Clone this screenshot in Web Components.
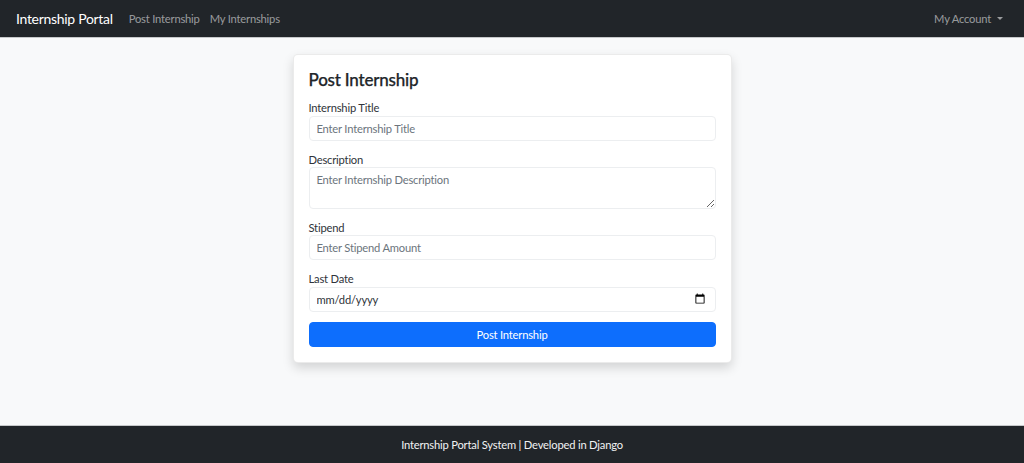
<!DOCTYPE html>
<html>
<head>
<meta charset="utf-8">
<title>Internship Portal</title>
<style>
html, body { margin: 0; height: 100%; }
body {
  background: #f8f9fa;
  color: #212529;
  font-family: Lato, "Open Sans", sans-serif;
  font-size: 11.2px;
  line-height: 1.5;
  letter-spacing: -0.2px;
}
.page { display: flex; flex-direction: column; height: 463px; overflow: hidden; }
</style>
</head>
<body>
<div class="page">
  <portal-navbar brand="Internship Portal">
    <nav-link>Post Internship</nav-link>
    <nav-link>My Internships</nav-link>
    <nav-link slot="right" caret>My Account</nav-link>
  </portal-navbar>
  <portal-main>
    <form-card heading="Post Internship">
      <form-field label="Internship Title" placeholder="Enter Internship Title"></form-field>
      <form-field label="Description" placeholder="Enter Internship Description" type="textarea"></form-field>
      <form-field label="Stipend" placeholder="Enter Stipend Amount"></form-field>
      <form-field label="Last Date" type="date"></form-field>
      <submit-button>Post Internship</submit-button>
    </form-card>
  </portal-main>
  <portal-footer>Internship Portal System | Developed in Django</portal-footer>
</div>

<script>
class PortalNavbar extends HTMLElement {
  constructor() {
    super();
    this.attachShadow({ mode: 'open' });
    this.shadowRoot.innerHTML = `
<style>
:host {
  display: flex;
  align-items: center;
  box-sizing: content-box;
  height: 36px;
  flex: none;
  padding: 1px 16px 0;
  background: #212529;
  border-bottom: 1px solid #c6c8ca;
}
.brand { color: #fff; font-size: 14px; letter-spacing: -0.3px; margin-right: 16px; line-height: 24px; }
.links { display: flex; gap: 10px; }
.right { margin-left: auto; margin-right: 5px; }
</style>
<span class="brand"></span>
<div class="links"><slot></slot></div>
<div class="right"><slot name="right"></slot></div>`;
  }
  connectedCallback() {
    this.shadowRoot.querySelector('.brand').textContent = this.getAttribute('brand');
  }
}

class NavLink extends HTMLElement {
  constructor() {
    super();
    this.attachShadow({ mode: 'open' });
    this.shadowRoot.innerHTML = `
<style>
:host { display: inline-flex; align-items: center; color: rgba(255,255,255,.55); font-size: 11.2px; cursor: pointer; }
.caret {
  display: none;
  margin-left: 6px;
  border-top: 3.4px solid;
  border-left: 3.4px solid transparent;
  border-right: 3.4px solid transparent;
}
:host([caret]) .caret { display: inline-block; }
</style>
<slot></slot><span class="caret"></span>`;
  }
}

class PortalMain extends HTMLElement {
  constructor() {
    super();
    this.attachShadow({ mode: 'open' });
    this.shadowRoot.innerHTML = `
<style>
:host { display: flex; justify-content: center; align-items: flex-start; flex: 1; padding-top: 16px; }
</style>
<slot></slot>`;
  }
}

class FormCard extends HTMLElement {
  constructor() {
    super();
    this.attachShadow({ mode: 'open' });
    this.shadowRoot.innerHTML = `
<style>
:host {
  display: block;
  box-sizing: border-box;
  width: 439px;
  padding: 15px;
  background: #fff;
  border: 1px solid rgba(0,0,0,.08);
  border-radius: 5px;
  box-shadow: 0 5px 11px rgba(0,0,0,.15);
}
h4 { margin: 0 0 10px; font-size: 17px; font-weight: 500; line-height: 20px; -webkit-text-stroke: .25px; }
</style>
<h4></h4>
<slot></slot>`;
  }
  connectedCallback() {
    this.shadowRoot.querySelector('h4').textContent = this.getAttribute('heading');
  }
}

class FormField extends HTMLElement {
  constructor() {
    super();
    this.attachShadow({ mode: 'open' });
    this.shadowRoot.innerHTML = `
<style>
:host { display: block; margin-bottom: 10.4px; }
label { display: block; padding-top: .4px; margin-bottom: .6px; font-size: 11.2px; line-height: 15px; color: #2f343a; }
.ctl {
  display: block;
  box-sizing: border-box;
  width: 100%;
  height: 25px;
  padding: 3px 7px;
  font: inherit;
  letter-spacing: inherit;
  font-size: 11.2px;
  line-height: 17px;
  color: #2f343a;
  background: #fff;
  border: 1px solid #eceef0;
  border-radius: 4px;
  outline: none;
}
textarea.ctl { height: 41.4px; resize: vertical; }
.ctl::placeholder { color: #6c757d; opacity: 1; }
.ctl::-webkit-datetime-edit-text { padding: 0; }
.ctl::-webkit-datetime-edit-month-field,
.ctl::-webkit-datetime-edit-day-field,
.ctl::-webkit-datetime-edit-year-field { padding: 0; }
</style>
<label></label>`;
  }
  connectedCallback() {
    const type = this.getAttribute('type') || 'text';
    const ctl = document.createElement(type === 'textarea' ? 'textarea' : 'input');
    if (type !== 'textarea') ctl.type = type;
    ctl.className = 'ctl';
    if (this.hasAttribute('placeholder')) ctl.placeholder = this.getAttribute('placeholder');
    this.shadowRoot.querySelector('label').textContent = this.getAttribute('label');
    this.shadowRoot.appendChild(ctl);
  }
}

class SubmitButton extends HTMLElement {
  constructor() {
    super();
    this.attachShadow({ mode: 'open' });
    this.shadowRoot.innerHTML = `
<style>
:host { display: block; }
button {
  display: block;
  width: 100%;
  height: 25px;
  padding: 2px 0 0;
  font: inherit;
  letter-spacing: inherit;
  font-size: 11.2px;
  color: #fff;
  background: #0d6efd;
  border: 1px solid #0d6efd;
  border-radius: 4px;
  cursor: pointer;
}
</style>
<button type="submit"><slot></slot></button>`;
  }
}

class PortalFooter extends HTMLElement {
  constructor() {
    super();
    this.attachShadow({ mode: 'open' });
    this.shadowRoot.innerHTML = `
<style>
:host {
  display: flex;
  flex: none;
  justify-content: center;
  align-items: center;
  box-sizing: content-box;
  height: 36px;
  padding-top: 1px;
  background: #212529;
  color: #f1f2f3;
  font-size: 11.2px;
  border-top: 1px solid #c6c8ca;
}
</style>
<slot></slot>`;
  }
}

customElements.define('portal-navbar', PortalNavbar);
customElements.define('nav-link', NavLink);
customElements.define('portal-main', PortalMain);
customElements.define('form-card', FormCard);
customElements.define('form-field', FormField);
customElements.define('submit-button', SubmitButton);
customElements.define('portal-footer', PortalFooter);
</script>
</body>
</html>
